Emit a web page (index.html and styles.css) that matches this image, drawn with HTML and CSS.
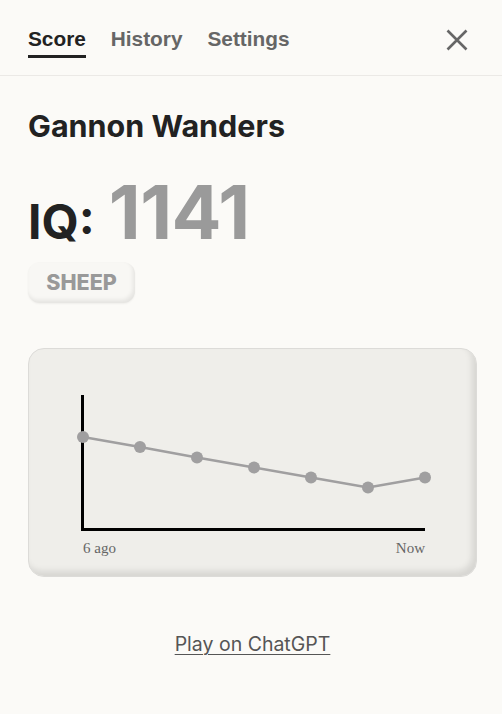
FILE: index.html
```html
<!DOCTYPE html>
<html>
<head>
<meta charset="utf-8">
<link rel="stylesheet" href="styles.css">
</head>
<body>
<div class="page">
  <header class="topbar">
    <nav class="tabs">
      <span class="tab active">Score</span>
      <span class="tab">History</span>
      <span class="tab">Settings</span>
    </nav>
    <button class="close" aria-label="Close">
      <svg width="22" height="22" viewBox="0 0 22 22"><path d="M1.5 1.5 L20.5 20.5 M20.5 1.5 L1.5 20.5" stroke="#666" stroke-width="2.6" fill="none"/></svg>
    </button>
  </header>
  <main class="content">
    <h1 class="name">Gannon Wanders</h1>
    <div class="iq"><span class="iq-label">IQ:</span><span class="iq-value">1141</span></div>
    <div class="badge">SHEEP</div>
    <div class="card">
      <svg class="chart" width="447" height="227" viewBox="0 0 447 227">
        <line x1="53.5" y1="46" x2="53.5" y2="182" stroke="#000" stroke-width="3"/>
        <line x1="52" y1="180.5" x2="396" y2="180.5" stroke="#000" stroke-width="3"/>
        <polyline points="54,88 111,98 168,108.5 225,118.5 282,128.5 339,138.5 396,128.5" fill="none" stroke="#a09fa0" stroke-width="2.5"/>
        <g fill="#a09fa0">
          <circle cx="54" cy="88" r="6"/>
          <circle cx="111" cy="98" r="6"/>
          <circle cx="168" cy="108.5" r="6"/>
          <circle cx="225" cy="118.5" r="6"/>
          <circle cx="282" cy="128.5" r="6"/>
          <circle cx="339" cy="138.5" r="6"/>
          <circle cx="396" cy="128.5" r="6"/>
        </g>
        <text x="54" y="204" class="axis-label">6 ago</text>
        <text x="396" y="204" class="axis-label" text-anchor="end">Now</text>
      </svg>
    </div>
    <div class="footer"><a class="play" href="#">Play on ChatGPT</a></div>
  </main>
</div>
</body>
</html>
```

FILE: styles.css
```css
html, body {
  margin: 0;
  padding: 0;
  background: #fbfaf7;
}
body {
  font-family: Inter, "Liberation Sans", sans-serif;
  color: #222;
}
.page {
  width: 502px;
}
.topbar {
  display: flex;
  align-items: flex-start;
  justify-content: space-between;
  padding: 0 34px 0 28px;
  height: 75px;
  border-bottom: 1px solid #ebe9e6;
}
.tabs {
  display: flex;
  gap: 25px;
  padding-top: 25px;
}
.tab {
  font-family: "Liberation Sans", Arial, sans-serif;
  font-weight: bold;
  font-size: 20.8px;
  line-height: 28px;
  color: #666;
  padding-bottom: 2px;
  border-bottom: 3px solid transparent;
}
.tab.active {
  color: #222;
  border-bottom-color: #222;
}
.close {
  background: none;
  border: 0;
  padding: 0;
  margin-top: 29px;
  width: 22px;
  height: 22px;
  display: block;
}
.close svg { display: block; }
.content {
  padding: 0 25px 0 28px;
}
.name {
  margin: 31px 0 0;
  font-size: 30.5px;
  font-weight: 700;
  line-height: 38px;
  color: #222;
}
.iq {
  display: flex;
  align-items: baseline;
  gap: 14px;
  margin-top: 30px;
  height: 74px;
}
.iq-label {
  font-size: 48px;
  font-weight: 700;
  color: #222;
  line-height: 74px;
}
.iq-value {
  font-size: 74px;
  font-weight: 700;
  color: #9a9a9a;
  line-height: 74px;
  letter-spacing: -0.5px;
}
.badge {
  display: inline-block;
  margin-top: 13px;
  width: 107px;
  height: 41px;
  box-sizing: border-box;
  line-height: 41px;
  text-align: center;
  font-size: 21.5px;
  font-weight: 800;
  color: #999;
  background: #f8f7f4;
  border-radius: 12px;
  box-shadow: inset -2px -3px 4px rgba(0,0,0,0.08), 0 1px 2px rgba(0,0,0,0.05);
}
.card {
  margin-top: 45px;
  width: 449px;
  height: 229px;
  box-sizing: border-box;
  background: #efeeea;
  border: 1px solid #dcdbd8;
  border-radius: 16px;
  box-shadow: inset -4px -5px 6px rgba(0,0,0,0.10);
}
.chart {
  display: block;
}
.axis-label {
  font-family: "Liberation Serif", "Times New Roman", serif;
  font-size: 15px;
  fill: #666;
}
.footer {
  text-align: center;
  margin-top: 55px;
}
.play {
  font-size: 19.5px;
  color: #555;
  text-decoration: underline;
  text-underline-offset: 3px;
  text-decoration-thickness: 1px;
}
```
